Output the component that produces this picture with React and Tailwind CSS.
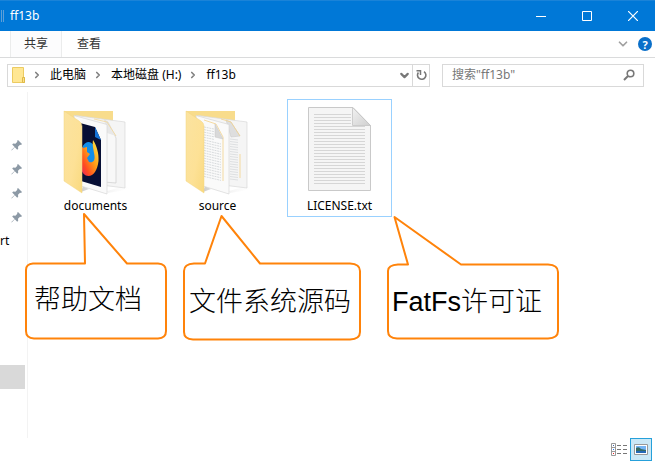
import { ChevronDown, ChevronRight } from "lucide-react";

function Pin() {
  return (
    <svg viewBox="0 0 12 12" className="h-3 w-3" aria-hidden="true">
      <path d="M7 1l4 4-1 1-1-.3-2 2 .2 2.1-1 1-2.4-2.5L.7 11.400l-.3-.3 3.200-3.200L1.200 5.500l1-1 2.200.2 2-2L6 2z" fill="#8c99a5" />
    </svg>
  );
}

function FolderIcon({ preview }) {
  return (
    <svg viewBox="0 0 103 96" className="h-24 w-full" aria-hidden="true">
      <defs>
        <linearGradient id={"flap" + preview} x1="0" y1="0" x2="1" y2="1">
          <stop offset="0" stopColor="#fbe3a0" />
          <stop offset="0.6" stopColor="#fde196" />
          <stop offset="1" stopColor="#f9d97e" />
        </linearGradient>
        <linearGradient id={"fox" + preview} x1="1" y1="0" x2="0" y2="1">
          <stop offset="0" stopColor="#fff04d" />
          <stop offset="0.45" stopColor="#ff9c16" />
          <stop offset="0.75" stopColor="#ff4b21" />
          <stop offset="1" stopColor="#e2206d" />
        </linearGradient>
        <linearGradient id={"shade" + preview}>
          <stop offset="0" stopColor="#cccccc" />
          <stop offset="1" stopColor="#ffffff" stopOpacity="0" />
        </linearGradient>
      </defs>
      <path d="M63 91l18-5 8 1-8 3-17 3zM37 92l8-3-6-3z" fill={"url(#shade" + preview + ")"} />
      <path d="M20 11h49v68H20z" fill="#f8dc8c" />
      <path d="M32 15.500l49 6.500v66l-24-3z" fill="#f5f5f5" stroke="#d9d9d9" strokeWidth=".7" />
      {preview === "docs" ? (
        <>
          <path d="M60 20l4 2 8 16v45l-12-1" fill="#f8f8f8" stroke="#cfcfcf" strokeWidth=".7" />
          <path d="M60 20l4 2 8 14-9-3z" fill="#e8e8e8" />
          <path d="M50 19l13 3 9 14" fill="none" stroke="#f2d28b" strokeWidth=".7" />
        </>
      ) : (
        <>
          <path d="M60 20l5 2 9 14-9 1z" fill="#dedede" stroke="#c7c7c7" strokeWidth=".5" />
          <path d="M55 19l10 3 9 14M74 54v24" fill="none" stroke="#f2d28b" strokeWidth=".8" />
          {Array.from({ length: 17 }, (_, i) => (
            <path key={i} d={`M64 ${39 + i * 2.5}l8 1`} stroke="#d3d6d8" strokeWidth=".7" />
          ))}
        </>
      )}
      <path d="M30 15.500l33 9v69.500l-26-8z" fill="#fafafa" stroke="#d7d7d7" strokeWidth=".7" />
      {preview === "docs" ? (
        <>
          <path d="M36 23l15 4 6 13v47l-20-6z" fill="#070f35" />
          <path d="M51 27l6 13-6-3z" fill="#1472d8" />
          <ellipse cx="44.500" cy="54" rx="7.500" ry="12" fill="#118ee9" />
          <path d="M49 40c4 6 6 14 5.500 21-1 9-5 15-10 15-4 0-6-3-7.500-7V45l2 3 4-1 0 5 3 2-3 4 2 4c4 1 6-1 5.500-6-.5-5-2.500-10-1.500-16z" fill={"url(#fox" + preview + ")"} />
        </>
      ) : (
        <>
          <path d="M38 20l12 4 7 13v44" fill="none" stroke="#f2d28b" strokeWidth=".8" />
          <path d="M49 24l8 15-8-2z" fill="#d9d9d9" stroke="#c7c7c7" strokeWidth=".5" />
          {Array.from({ length: 20 }, (_, i) => (
            <path key={i} d={`M38 ${27 + i * 2.6}L${i < 5 ? 48 : 55} ${(i < 5 ? 29 : 31) + i * 2.6}`} stroke="#cfd3d6" strokeWidth=".8" strokeDasharray="2 .7" />
          ))}
        </>
      )}
      <path d="M20 11l15 10q3 2 3 5v67L20 81z" fill={"url(#flap" + preview + ")"} stroke="#f3d480" strokeWidth=".5" />
    </svg>
  );
}

function TextFileIcon() {
  return (
    <svg viewBox="0 0 103 96" className="h-24 w-full" aria-hidden="true">
      <defs>
        <linearGradient id="corner" x1="0" y1="0" x2="1" y2="1">
          <stop offset="0" stopColor="#f2f2f2" />
          <stop offset="1" stopColor="#cfcfcf" />
        </linearGradient>
      </defs>
      <path d="M20.500 7.500H65L82.500 25.500V90.500H20.500z" fill="#f5f5f5" stroke="#c9c9c9" />
      <path d="M64.500 7.500v18h18z" fill="url(#corner)" stroke="#c4c4c4" strokeWidth=".8" />
      {Array.from({ length: 24 }, (_, i) => (
        <path key={i} d={`M26 ${14.5 + i * 3}H${i < 4 ? 63 : 77}`} stroke="#d6d6d6" />
      ))}
    </svg>
  );
}

function FileTile({ name, selected, children }) {
  return (
    <button
      type="button"
      className={"flex w-[105px] flex-col border text-center " + (selected ? "border-[#99d1ff]" : "border-transparent")}
    >
      {children}
      <span className="w-full leading-5 text-black">{name}</span>
    </button>
  );
}

function Callout({ place, box, path, text }) {
  return (
    <div className={"absolute " + place}>
      <svg viewBox={box} className="block h-full w-full" aria-hidden="true">
        <path d={path} fill="#fff" stroke="#ff830a" strokeWidth="2" strokeLinejoin="round" />
      </svg>
      <p className="absolute bottom-6 left-[10px] whitespace-nowrap font-['Liberation_Sans','Noto_Sans_CJK_SC',sans-serif] text-[27px] font-light leading-8 text-black">
        {text}
      </p>
    </div>
  );
}

function Crumb({ children }) {
  return (
    <>
      <ChevronRight size={10} strokeWidth={4} className="ml-[7px] mr-2 text-[#808080]" />
      <button type="button" className="whitespace-nowrap">{children}</button>
    </>
  );
}

export default function App() {
  return (
    <div className="flex min-h-screen flex-col bg-white font-['Noto_Sans','Noto_Sans_CJK_SC',sans-serif] text-xs text-black">
      <header className="flex h-[31px] items-center border-t border-[#1a83d8] bg-[#0078d7] text-white">
        <span className="ml-px h-3 w-[3px] border-x border-[#5d9fd8]" />
        <h1 className="ml-[6px] flex-1">ff13b</h1>
        <button type="button" aria-label="最小化" className="flex h-full w-[46px] items-center justify-center">
          <svg viewBox="0 0 10 10" className="h-[10px] w-[10px]"><path d="M0 5.500h10" stroke="currentColor" /></svg>
        </button>
        <button type="button" aria-label="最大化" className="flex h-full w-[46px] items-center justify-center">
          <svg viewBox="0 0 10 10" className="h-[10px] w-[10px]"><path d="M.5.5h9v9h-9z" fill="none" stroke="currentColor" /></svg>
        </button>
        <button type="button" aria-label="关闭" className="flex h-full w-[45px] items-center justify-center">
          <svg viewBox="0 0 10 10" className="h-[10px] w-[10px]"><path d="M0 0l10 10M10 0L0 10" stroke="currentColor" strokeWidth="1.200" /></svg>
        </button>
      </header>

      <nav className="flex h-[27px] items-center border-b border-[#dadbdc] text-[#333]">
        <button type="button" className="ml-[10px] h-full w-[52px] border-x border-[#ebecec] bg-[#fcfcfd]">共享</button>
        <button type="button" className="h-full w-[54px]">查看</button>
        <span className="flex-1" />
        <button type="button" aria-label="展开功能区" className="mr-2"><ChevronDown size={14} strokeWidth={3} className="text-[#a0a0a0]" /></button>
        <button type="button" aria-label="帮助" className="mr-[3px] flex h-[14px] w-[14px] items-center justify-center rounded-full bg-[#0a6fc9] text-[11px] font-bold leading-none text-white">?</button>
      </nav>

      <div className="flex h-[34px] items-center pl-[7px] pr-[11px]">
        <div className="flex h-[23px] min-w-0 flex-1 items-center border border-[#d9d9d9]">
          <svg viewBox="0 0 13 16" className="ml-1 h-4 w-[13px]" aria-hidden="true">
            <path d="M.5.5h11v10h1v5H.5z" fill="#ffe794" stroke="#eccb61" />
            <path d="M10.500 10.500h2v5h-2z" fill="#fbe08a" stroke="#dfb947" />
          </svg>
          <Crumb>此电脑</Crumb>
          <Crumb>本地磁盘 (H:)</Crumb>
          <Crumb>ff13b</Crumb>
          <span className="flex-1" />
          <button type="button" aria-label="历史记录" className="mr-px"><ChevronDown size={13} strokeWidth={4} className="text-[#777]" /></button>
          <button type="button" aria-label="刷新" className="flex h-full w-[17px] items-center justify-center border-l border-[#d9d9d9]">
            <svg viewBox="0 0 11 12" className="h-3 w-[11px]">
              <path d="M8 2.600A4.200 4.200 0 1 1 2.400 3.500" fill="none" stroke="#777" strokeWidth="1.600" />
              <path d="M4.500 6V1.800H.5" fill="none" stroke="#777" strokeWidth="1.500" />
            </svg>
          </button>
        </div>
        <label className="ml-3 flex h-[23px] w-[202px] items-center border border-[#d9d9d9] pl-[9px] pr-2">
          <input aria-label="搜索" placeholder={'搜索"ff13b"'} className="min-w-0 flex-1 bg-transparent outline-none placeholder:text-[#777]" />
          <svg viewBox="0 0 12 12" className="h-3 w-3" aria-hidden="true">
            <circle cx="7.500" cy="4.500" r="3.300" fill="none" stroke="#777" strokeWidth="1.600" />
            <path d="M5 7L1 11" stroke="#777" strokeWidth="2" />
          </svg>
        </label>
      </div>

      <div className="flex flex-1">
        <aside className="w-7 overflow-hidden border-r border-[#f3f3f3] pt-[41px]">
          {[1, 2, 3, 4].map((n) => (
            <div key={n} className="flex h-6 items-center pl-[11px]"><Pin /></div>
          ))}
          <div className="h-6 leading-6">rt</div>
          <div className="mt-28 h-6 w-[25px] bg-[#d9d9d9]" />
        </aside>
        <main className="relative flex-1 pl-[15px] pt-[7px]">
          <div className="flex gap-[17px]">
            <FileTile name="documents"><FolderIcon preview="docs" /></FileTile>
            <FileTile name="source"><FolderIcon preview="code" /></FileTile>
            <FileTile name="LICENSE.txt" selected><TextFileIcon /></FileTile>
          </div>
          <Callout
            place="-left-1 top-[120px] h-[128px] w-[144px]"
            box="24 212 144 128"
            path="M84 214L85 263.500H33Q26 264 26 270V331Q26 338 34 338.500H158Q166 338 166 331V271Q166 264 158 263.500H127z"
            text="帮助文档"
          />
          <Callout
            place="left-[151px] top-[120px] h-[130px] w-[183px]"
            box="179 212 183 130"
            path="M221.500 216L205 263.500H194Q184 264 184 271V332Q184 339 193 339.500H350Q360 339 360 332V271Q360 264 350 263.500H260z"
            text="文件系统源码"
          />
          <Callout
            place="left-[354px] top-[122px] h-[128px] w-[180px]"
            box="382 214 180 128"
            path="M394.500 217L408 264.500H398Q388 265 388 271V331Q388 338 397 338.500H548Q558 338 558 331V272Q558 265 548 264.500H461z"
            text="FatFs许可证"
          />
        </main>
      </div>

      <footer className="flex h-[23px] items-center justify-end pr-[3px]">
        <button type="button" aria-label="详细信息" className="mr-px flex h-[23px] w-5 items-center justify-center">
          <svg viewBox="0 0 16 13" className="h-[13px] w-4">
            <path d="M.5.500h4v12h-4zM.5 4.500h4M.5 8.500h4" fill="#fff" stroke="#999" />
            <path d="M6 2.500h4M12 2.500h4M6 6.500h4M12 6.500h4M6 10.500h4M12 10.500h4" stroke="#777" />
            <path d="M2 2h1v1H2z" fill="#46a" /><path d="M2 6h1v1H2z" fill="#27f" /><path d="M2 10h1v1H2z" fill="#e22" />
          </svg>
        </button>
        <button type="button" aria-label="大图标" className="flex h-[23px] w-[22px] items-center justify-center border border-[#26a0da] bg-[#cbe8f6]">
          <svg viewBox="0 0 14 11" className="h-[11px] w-[14px]">
            <path d="M.5.500h13v10H.5z" fill="#fff" stroke="#999" />
            <path d="M2 2h10v7H2z" fill="#75b5f5" /><path d="M2 4q3-2 5 1l5 1v3H2z" fill="#386b62" /><path d="M2 7h10v2H2z" fill="#2569b7" />
          </svg>
        </button>
      </footer>
    </div>
  );
}
